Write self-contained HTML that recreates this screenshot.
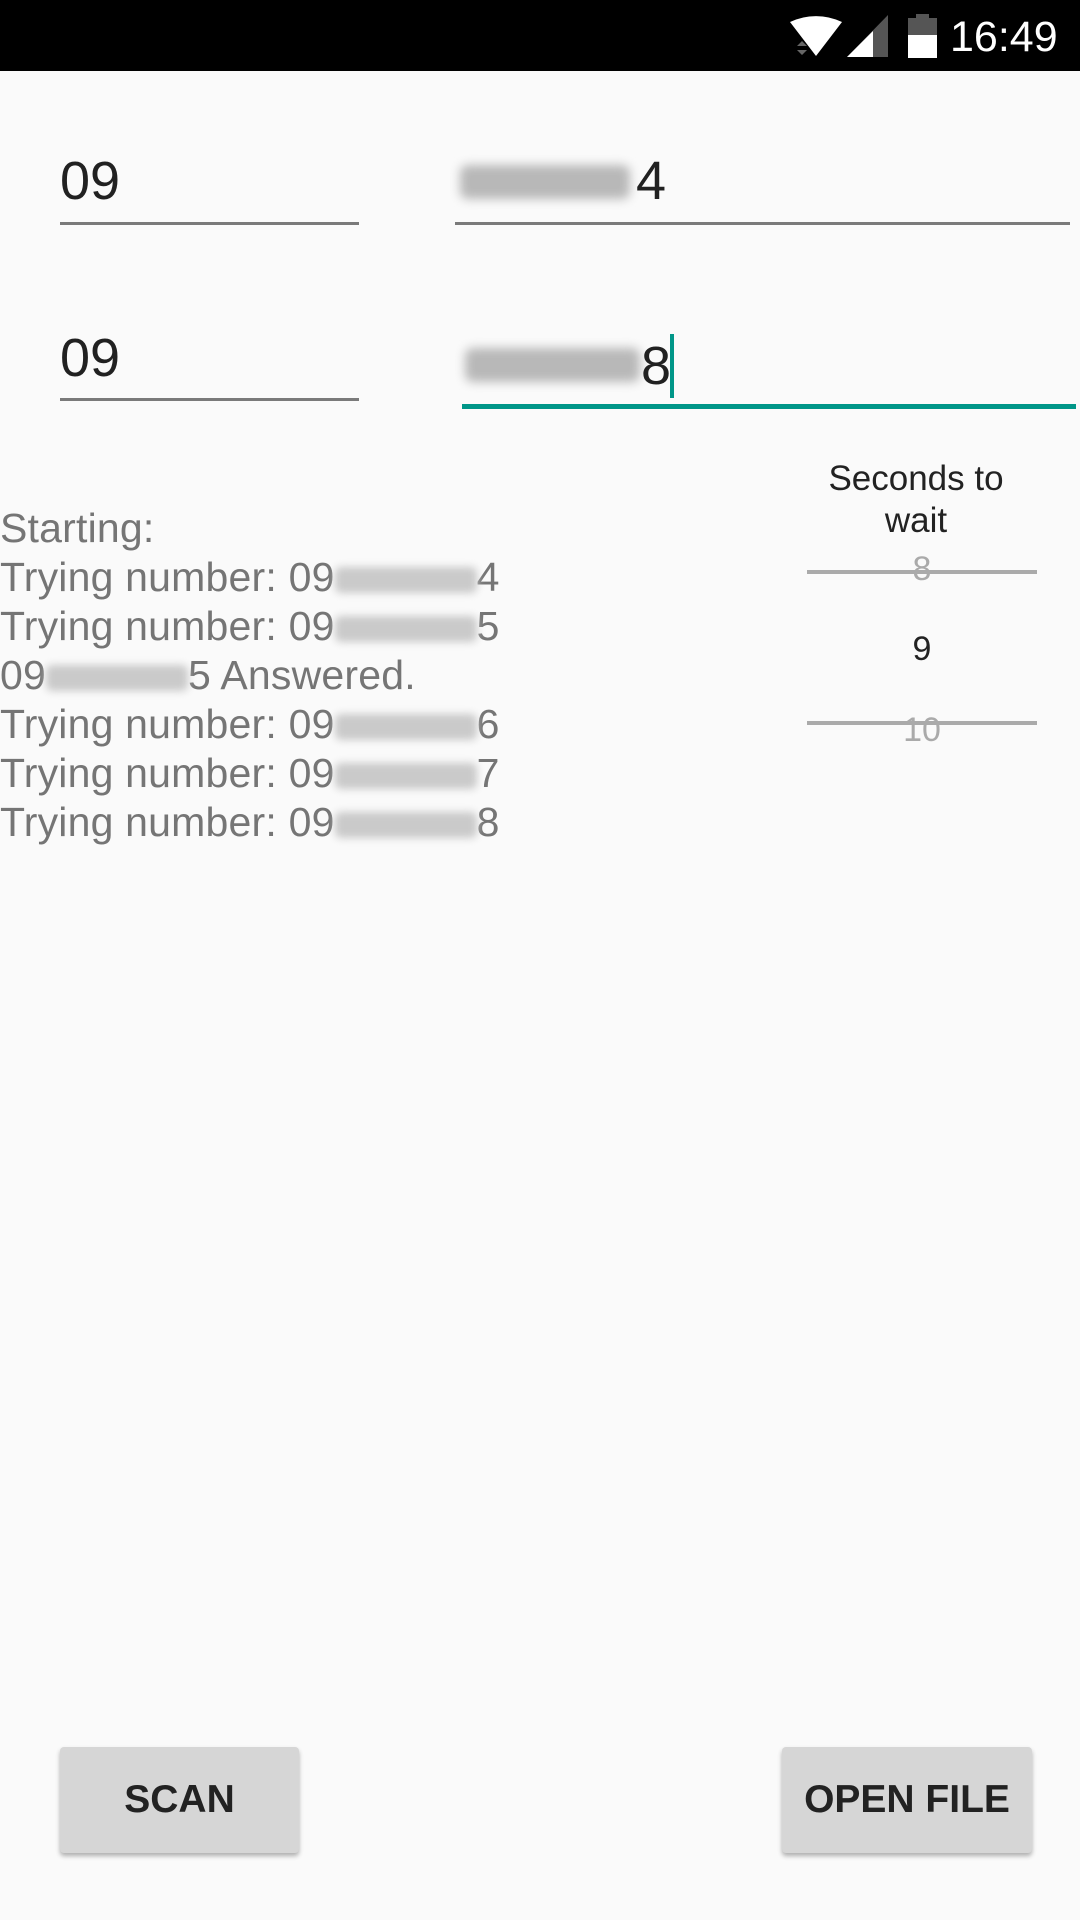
<!DOCTYPE html>
<html><head><meta charset="utf-8"><style>
*{margin:0;padding:0;box-sizing:border-box}
body{width:1080px;height:1920px;background:#fafafa;font-family:"Liberation Sans",sans-serif;position:relative;overflow:hidden}
.abs{position:absolute}
.sb{left:0;top:0;width:1080px;height:71px;background:#000}
.time{left:950px;top:14px;color:#fff;font-size:43px;line-height:46px}
.ul{height:3px;background:#7a7a7a}
.big{font-size:54px;color:#212121;line-height:60px}
.blur{background:#b8b8b8;filter:blur(5px);border-radius:8px}
.log{left:0;font-size:41px;color:#757575;line-height:49px;white-space:nowrap;letter-spacing:0.2px}
.lb{display:inline-block;width:142px;height:26px;background:#cacaca;filter:blur(4px);vertical-align:middle;border-radius:6px}
.btn{background:#d6d6d6;border-radius:4px;box-shadow:0 3px 5px rgba(0,0,0,.3);font-size:39px;font-weight:bold;color:#222;text-align:center;line-height:106px;height:106px;top:1747px}
.pk{font-size:34px;text-align:center;width:230px;left:807px}
</style></head><body>
<div class="abs sb"></div>
<svg class="abs" style="left:785px;top:10px" width="160" height="52">
<path d="M5 12 A60 60 0 0 1 57 12 L31 46 Z" fill="#fff"/>
<path d="M12 36 l5 -5 l5 5z M12 40 l5 5 l5 -5z" fill="#666"/>
<path d="M62 47 L103 5 L103 47 Z" fill="#555"/>
<path d="M62 47 L88 21 L88 47 Z" fill="#fff"/>
<rect x="123" y="8" width="29" height="40" fill="#555"/>
<rect x="131" y="4" width="13" height="5" fill="#555"/>
<rect x="123" y="25" width="29" height="23" fill="#fff"/>
</svg>
<div class="abs time">16:49</div>

<div class="abs big" style="left:60px;top:151px">09</div>
<div class="abs ul" style="left:60px;top:222px;width:299px"></div>
<div class="abs blur" style="left:460px;top:165px;width:170px;height:34px"></div>
<div class="abs big" style="left:636px;top:151px">4</div>
<div class="abs ul" style="left:455px;top:222px;width:615px"></div>

<div class="abs big" style="left:60px;top:328px">09</div>
<div class="abs ul" style="left:60px;top:398px;width:299px"></div>
<div class="abs blur" style="left:465px;top:348px;width:175px;height:34px"></div>
<div class="abs big" style="left:641px;top:336px">8</div>
<div class="abs" style="left:670px;top:334px;width:4px;height:64px;background:#009688"></div>
<div class="abs" style="left:462px;top:404px;width:614px;height:5px;background:#009688"></div>

<div class="abs log" style="top:504px">Starting:</div>
<div class="abs log" style="top:553px">Trying number: 09<span class="lb"></span>4</div>
<div class="abs log" style="top:602px">Trying number: 09<span class="lb"></span>5</div>
<div class="abs log" style="top:651px">09<span class="lb"></span>5 Answered.</div>
<div class="abs log" style="top:700px">Trying number: 09<span class="lb"></span>6</div>
<div class="abs log" style="top:749px">Trying number: 09<span class="lb"></span>7</div>
<div class="abs log" style="top:798px">Trying number: 09<span class="lb"></span>8</div>

<div class="abs" style="left:786px;top:458px;width:260px;text-align:center;font-size:35px;line-height:42px;color:#222">Seconds to<br>wait</div>
<div class="abs pk" style="top:550px;color:#aaa">8</div>
<div class="abs" style="left:807px;top:570px;width:230px;height:4px;background:#aaa"></div>
<div class="abs pk" style="top:630px;color:#222">9</div>
<div class="abs pk" style="top:711px;color:#aaa">10</div>
<div class="abs" style="left:807px;top:721px;width:230px;height:4px;background:#aaa"></div>

<div class="abs btn" style="left:60px;width:239px">SCAN</div>
<div class="abs btn" style="left:782px;width:250px">OPEN FILE</div>
</body></html>
